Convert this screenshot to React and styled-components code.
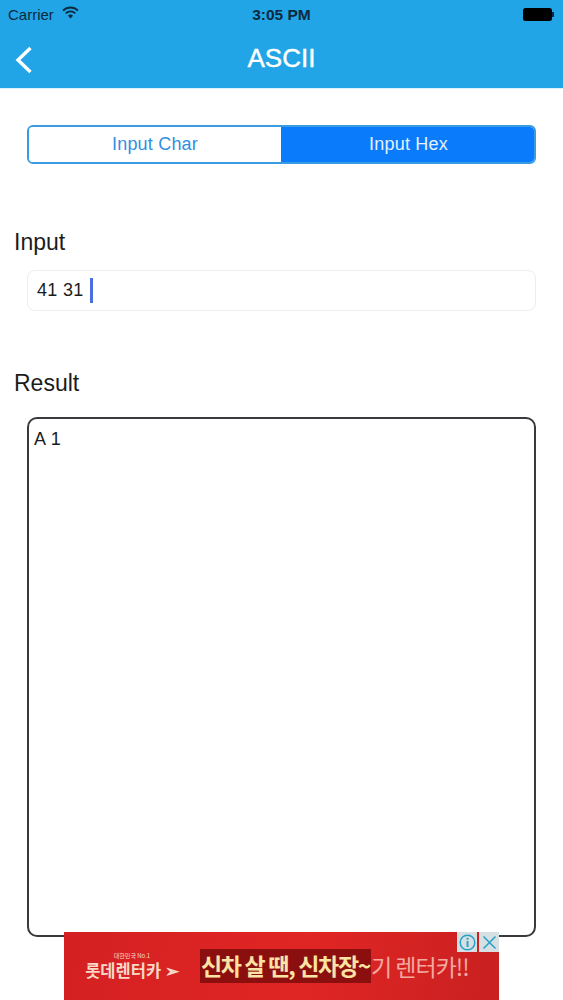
import React from "react";
import styled, { createGlobalStyle } from "styled-components";

const GlobalStyle = createGlobalStyle`
  html, body {
    margin: 0;
    padding: 0;
    background: #fff;
    font-family: "Liberation Sans", Arial, sans-serif;
  }
  * { box-sizing: border-box; }
`;

function App() {
  return (
    <Page>
      <GlobalStyle />
      <Header>
        <StatusBar>
          <Carrier>
            Carrier
            <svg width="17" height="13" viewBox="0 0 17 13">
              <path d="M1 4.6a10.6 10.6 0 0 1 15 0" fill="none" stroke="#0c2a40" strokeWidth="1.8" />
              <path d="M3.7 7.3a6.8 6.8 0 0 1 9.6 0" fill="none" stroke="#0c2a40" strokeWidth="1.8" />
              <path d="M6 9.7 8.5 12.4 11 9.7a3.4 3.4 0 0 0-5 0z" fill="#0c2a40" />
            </svg>
          </Carrier>
          <Clock>3:05 PM</Clock>
          <Battery>
            <BatteryBody />
            <BatteryTip />
          </Battery>
        </StatusBar>
        <NavBar>
          <BackIcon width="18" height="28" viewBox="0 0 18 28">
            <path d="M15.5 2 3 14l12.500 12" fill="none" stroke="#fff" strokeWidth="3.4" />
          </BackIcon>
          <Title>ASCII</Title>
        </NavBar>
      </Header>

      <Segments>
        <Segment>Input Char</Segment>
        <Segment $active>Input Hex</Segment>
      </Segments>

      <Label $top={65}>Input</Label>
      <InputBox>
        41 31
        <Caret />
      </InputBox>

      <Label $top={59}>Result</Label>
      <ResultBox>A 1</ResultBox>

      <Ad>
        <AdBrand>
          <AdSlogan>대한민국 No.1</AdSlogan>
          <AdLogo>롯데렌터카 ➢</AdLogo>
        </AdBrand>
        <AdCopy>
          <AdHighlight>신차 살 땐, 신차장~</AdHighlight>
          <AdRest>기 렌터카!!</AdRest>
        </AdCopy>
        <AdControls>
          <AdControl>
            <svg width="17" height="17" viewBox="0 0 17 17">
              <circle cx="8.500" cy="8.500" r="7.300" fill="none" stroke="#2aa0c8" strokeWidth="1.500" />
              <rect x="7.600" y="7" width="1.900" height="6" fill="#2aa0c8" />
              <rect x="7.600" y="3.800" width="1.900" height="1.900" fill="#2aa0c8" />
            </svg>
          </AdControl>
          <AdControl>
            <svg width="15" height="15" viewBox="0 0 15 15">
              <path d="M1.500 1.500 13.500 13.500M13.500 1.500 1.500 13.500" stroke="#2aa0c8" strokeWidth="1.500" />
            </svg>
          </AdControl>
        </AdControls>
      </Ad>
    </Page>
  );
}

export default App;

const Page = styled.div`
  position: relative;
  width: 563px;
  height: 1000px;
  overflow: hidden;
  background: #fff;
`;

const Header = styled.header`
  height: 89px;
  background: #22a5e7;
  border-bottom: 1px solid #d8f1fb;
  color: #fff;
`;

const StatusBar = styled.div`
  display: grid;
  grid-template-columns: 1fr auto 1fr;
  align-items: center;
  height: 29px;
  padding: 0 8px;
  color: #0c2a40;
  font-size: 15px;
`;

const Carrier = styled.div`
  display: flex;
  align-items: center;
  gap: 8px;

  svg {
    margin-top: -4px;
  }
`;

const Clock = styled.div`
  font-weight: 700;
  font-size: 15.500px;
`;

const Battery = styled.div`
  display: flex;
  justify-content: flex-end;
  align-items: center;
  padding-right: 1px;
`;

const BatteryBody = styled.div`
  width: 29px;
  height: 13px;
  border-radius: 2.500px;
  background: #000;
`;

const BatteryTip = styled.div`
  width: 2px;
  height: 5px;
  background: #0c2a40;
`;

const NavBar = styled.div`
  position: relative;
  display: flex;
  align-items: center;
  justify-content: center;
  height: 59px;
`;

const BackIcon = styled.svg`
  position: absolute;
  left: 15px;
  top: 17px;
`;

const Title = styled.h1`
  margin: 0;
  font-size: 26px;
  font-weight: 400;
  -webkit-text-stroke: 0.4px #fff;
`;

const Segments = styled.div`
  display: flex;
  height: 39px;
  margin: 36px 27px 0;
  border: 2px solid #3a9be2;
  border-radius: 6px;
  overflow: hidden;
`;

const Segment = styled.div`
  flex: ${(props) => (props.$active ? "1" : "0 0 252px")};
  display: flex;
  align-items: center;
  justify-content: center;
  font-size: 18px;
  letter-spacing: 0.2px;
  background: ${(props) => (props.$active ? "#0a7bfb" : "#fff")};
  color: ${(props) => (props.$active ? "#e4f1ff" : "#2f8fe0")};
  margin: ${(props) => (props.$active ? "-2px -2px -2px 0" : "0")};
`;

const Label = styled.div`
  margin: ${(props) => props.$top}px 14px 0;
  height: 27px;
  line-height: 27px;
  font-size: 23px;
  color: #1c1c1c;
`;

const InputBox = styled.div`
  display: flex;
  align-items: center;
  height: 41px;
  margin: 14px 27px 0;
  padding-left: 9px;
  border: 1px solid #ecedef;
  border-radius: 8px;
  font-size: 18px;
  letter-spacing: 0.3px;
  color: #1c1c1c;
`;

const Caret = styled.span`
  width: 3px;
  height: 25px;
  margin-left: 6px;
  background: #4a6fe0;
`;

const ResultBox = styled.div`
  height: 520px;
  margin: 20px 27px 0;
  padding: 9px 5px;
  border: 2px solid #3a3a3e;
  border-radius: 10px;
  font-size: 18px;
  line-height: 22px;
  letter-spacing: 0.4px;
  color: #1c1c1c;
`;

const Ad = styled.div`
  position: absolute;
  left: 64px;
  bottom: 0;
  display: flex;
  align-items: center;
  width: 435px;
  height: 68px;
  padding: 0 0 0 19px;
  background: linear-gradient(100deg, #d42022 0%, #e02624 55%, #c92021 100%);
  font-family: "Noto Sans CJK KR", "Liberation Sans", sans-serif;
`;

const AdBrand = styled.div`
  display: flex;
  flex-direction: column;
  align-items: center;
  width: 98px;
  margin-right: 19px;
  color: #f7d9c8;
`;

const AdSlogan = styled.span`
  font-size: 6px;
  line-height: 8px;
`;

const AdLogo = styled.span`
  font-size: 16.500px;
  line-height: 20px;
  font-weight: 700;
  white-space: nowrap;
`;

const AdCopy = styled.div`
  display: flex;
  align-items: center;
  white-space: nowrap;
  font-size: 23px;
`;

const AdHighlight = styled.span`
  width: 171px;
  height: 34px;
  line-height: 33px;
  background: #8c0f10;
  color: #fbe3a4;
  font-weight: 700;
  letter-spacing: -1.300px;
  text-align: center;
  overflow: hidden;
`;

const AdRest = styled.span`
  color: #f3a9a0;
  letter-spacing: -1px;
`;

const AdControls = styled.div`
  position: absolute;
  top: 0;
  right: 0;
  display: flex;
  gap: 2px;
`;

const AdControl = styled.div`
  display: flex;
  align-items: center;
  justify-content: center;
  width: 20px;
  height: 20px;
  background: #d6dfe2;
`;
